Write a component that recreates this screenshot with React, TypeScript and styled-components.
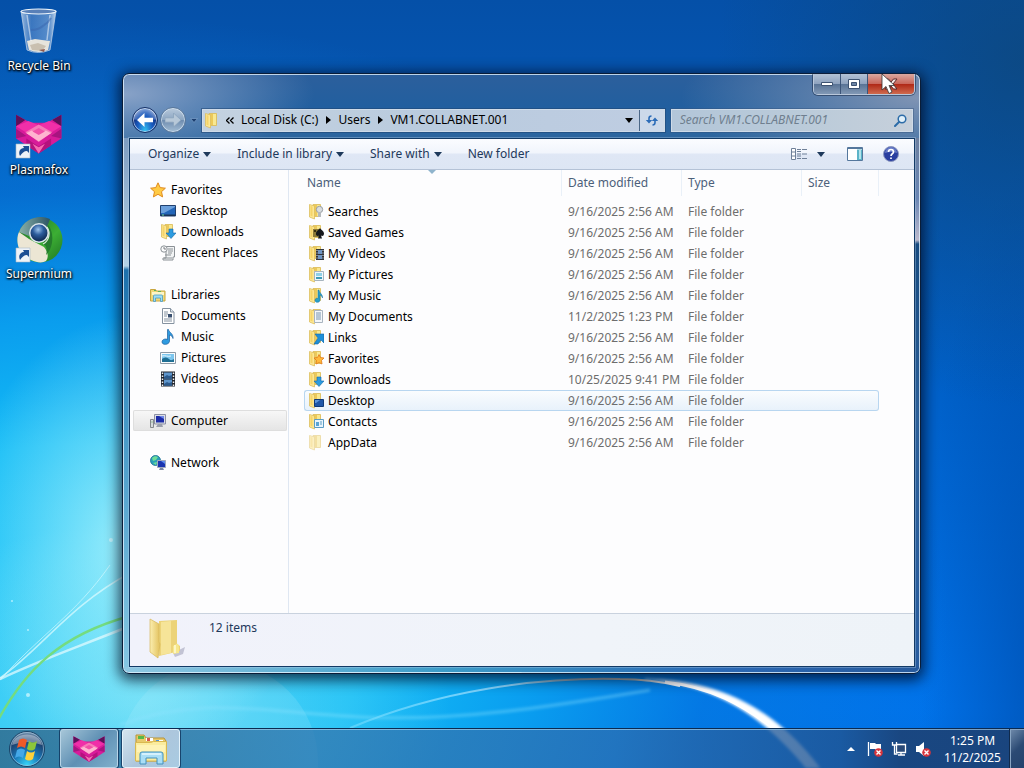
import React from "react";
import styled, { createGlobalStyle, css } from "styled-components";

const GlobalStyle = createGlobalStyle`
  * { box-sizing: border-box; }
  body {
    margin: 0;
    font: 12px/18px "Noto Sans", "Open Sans", sans-serif;
    color: #000;
  }
  button, input { font: inherit; color: inherit; }
  ul { list-style: none; margin: 0; padding: 0; }
  a { color: inherit; text-decoration: none; }
`;

const plainButton = css`
  border: 0;
  padding: 0;
  background: none;
  display: flex;
  align-items: center;
  justify-content: center;
`;

/* ---------- desktop ---------- */

const Desktop = styled.div`
  position: relative;
  min-height: 100vh;
  display: grid;
  grid-template-rows: 1fr 40px;
  overflow: hidden;
  background:
    radial-gradient(ellipse 17% 30% at 13% 71%, rgba(180, 246, 252, 0.85), rgba(150, 240, 250, 0) 100%),
    radial-gradient(ellipse 30% 24% at 14% 92%, rgba(120, 225, 245, 0.75), rgba(100, 220, 245, 0) 100%),
    radial-gradient(ellipse 85% 82% at 8% 84%, #16c4f8 0%, #14bcf6 32%, rgba(10, 160, 240, 0.95) 52%, rgba(6, 124, 224, 0.6) 72%, rgba(4, 100, 220, 0) 100%),
    radial-gradient(ellipse 30% 45% at 100% 8%, rgba(14, 70, 120, 0.75), rgba(0, 60, 130, 0) 100%),
    radial-gradient(ellipse 12% 70% at 102% 90%, rgba(0, 64, 150, 0.55), rgba(0, 64, 150, 0) 100%),
    linear-gradient(#0550a8 0%, #0556b2 15%, #0060c8 50%, #0072ea 92%, #0070e4 100%);
`;

const Streaks = styled.svg`
  position: absolute;
  inset: 0;
  width: 100%;
  height: 100%;
`;

const Workspace = styled.main`
  position: relative;
  padding-top: 7px;
`;

const Shortcuts = styled.ul`
  display: flex;
  flex-direction: column;
  gap: 36px;
  width: 78px;
`;

const Shortcut = styled.button`
  ${plainButton}
  flex-direction: column;
  width: 100%;
  gap: 2px;
  color: #fff;
  white-space: nowrap;
  text-shadow: 0 1px 2px #000, 1px 1px 2px #000, 0 0 3px rgba(0, 0, 0, 0.7);
`;

/* ---------- window ---------- */

const Window = styled.section`
  position: absolute;
  top: 73px;
  right: 103px;
  bottom: 54px;
  left: 122px;
  display: flex;
  flex-direction: column;
  padding: 0 5px 6px 6px;
  border: 1px solid #0a1d38;
  border-radius: 7px;
  background:
    radial-gradient(ellipse 24% 66px at 0 20px, rgba(148, 170, 204, 0.9), rgba(120, 150, 195, 0) 100%) 0 0 / 100% 64px no-repeat,
    radial-gradient(ellipse 30% 76px at 100% 24px, rgba(138, 154, 182, 0.9), rgba(120, 140, 175, 0) 100%) 0 0 / 100% 64px no-repeat,
    linear-gradient(#2c5f9c, #225f9f 50%, #2d669f) 0 0 / 100% 64px no-repeat,
    linear-gradient(#7e9cc0, #b4d2e6 128px, #1d70ac 132px, #3f93c4 260px, #84c6e2 530px) 0 64px / 50% 100% no-repeat,
    linear-gradient(#6b7f9f, #6a86b4 60px, #bcb9cc 102px, #174b80 106px, #2c5f98 280px, #285c9e) 100% 64px / 50% 530px no-repeat,
    linear-gradient(90deg, #8fc8e2, #3c9cc8 40%, #2a68b4);
  box-shadow:
    inset 0 0 0 1px rgba(225, 240, 252, 0.8),
    0 3px 14px 3px rgba(0, 8, 30, 0.75);
`;

const GlassFoot = styled.div`
  position: absolute;
  right: 1px;
  bottom: 1px;
  left: 1px;
  height: 5px;
  border-radius: 0 0 5px 5px;
  background: linear-gradient(90deg, #8fc8e2, #3c9cc8 40%, #2a68b4 75%, #275a9c);
`;

const TitleBar = styled.header`
  display: flex;
  justify-content: flex-end;
  height: 21px;
`;

const CaptionButtons = styled.div`
  display: flex;
  height: 21px;
  border: 1px solid #b9c7da;
  border-top: 0;
  border-radius: 0 0 5px 5px;
  overflow: hidden;
  box-shadow: 0 0 0 1px rgba(15, 32, 60, 0.5);
`;

const CaptionButton = styled.button<{ $close?: boolean }>`
  ${plainButton}
  width: ${(p) => (p.$close ? 46 : 27)}px;
  border-right: ${(p) => (p.$close ? "0" : "1px solid #3c5579")};
  background: ${(p) =>
    p.$close
      ? "linear-gradient(#d9a8a0, #c9685c 48%, #b02a18 52%, #cf6a4e)"
      : "linear-gradient(#b3c2d6, #8fa3bf 48%, #5a7496 52%, #8198b5)"};
`;

const NavRow = styled.nav`
  display: flex;
  align-items: center;
  height: 22px;
  margin: 14px 2px 7px 3px;
`;

const NavCircle = styled.button<{ $dim?: boolean }>`
  ${plainButton}
  flex: none;
  width: 26px;
  height: 26px;
  margin-right: 2px;
  border: 1px solid ${(p) => (p.$dim ? "#5a7799" : "#142f66")};
  border-radius: 50%;
  background: ${(p) =>
    p.$dim
      ? "linear-gradient(#b9cadc, #8ca6c2 48%, #6f8db0 52%, #a3bdd4)"
      : "radial-gradient(ellipse at 50% 100%, #35c8f5 0%, #1a5cc0 45%, rgba(20, 60, 150, 0) 75%), linear-gradient(#a9bfe2, #5575b8 45%, #12307e 52%, #1c56b4)"};
  box-shadow: inset 0 0 0 1px rgba(225, 238, 250, 0.65);
`;

const History = styled.button`
  ${plainButton}
  width: 12px;
  height: 20px;
`;

const AddressBar = styled.div`
  display: flex;
  align-items: stretch;
  flex: 462;
  height: 23px;
  margin: 0 6px 0 2px;
  border: 1px solid #cfdbe8;
  background: linear-gradient(90deg, #c4d2e0, #b9cbde 50%, #bfcde2);
  box-shadow: 0 0 0 1px rgba(30, 66, 110, 0.5);
`;

const AddressIcon = styled.span`
  display: flex;
  align-items: center;
  width: 23px;
  padding-left: 1px;
`;

const Crumb = styled.button<{ $lead?: boolean }>`
  ${plainButton}
  margin-right: ${(p) => (p.$lead ? 7 : 0)}px;
  white-space: nowrap;
`;

const CrumbMark = styled.span`
  display: flex;
  align-items: center;
  justify-content: center;
  width: 20px;
`;

const AddressAction = styled.button<{ $end?: boolean }>`
  ${plainButton}
  width: ${(p) => (p.$end ? 25 : 20)}px;
  margin-left: ${(p) => (p.$end ? "0" : "auto")};
  border-left: ${(p) => (p.$end ? "1px solid #4b6788" : "0")};
  background: ${(p) => (p.$end ? "rgba(225, 235, 248, 0.4)" : "none")};
`;

const SearchBox = styled.label`
  display: flex;
  align-items: center;
  flex: 228;
  height: 23px;
  padding: 0 5px 0 8px;
  border: 1px solid #cfdbe8;
  background: linear-gradient(90deg, #b3c6d9, #b9cad9 50%, #c6d0db);
  box-shadow: 0 0 0 1px rgba(50, 80, 120, 0.4);
`;

const SearchInput = styled.input`
  flex: 1;
  min-width: 0;
  padding: 0;
  border: 0;
  outline: 0;
  background: none;
  font-style: italic;
  &::placeholder { color: #6f7f8f; opacity: 1; }
`;

const Client = styled.div`
  position: relative;
  flex: 1;
  display: grid;
  grid-template-rows: 31px 1fr 53px;
  min-height: 0;
  border: 1px solid #123a66;
  background: #fdfdfe;
  box-shadow: 0 0 0 1px rgba(190, 215, 238, 0.35);
`;

const Toolbar = styled.div`
  display: flex;
  align-items: center;
  padding: 0 11px 0 5px;
  border-bottom: 1px solid #b4c2d6;
  background: linear-gradient(#fbfcff, #f1f5fc 45%, #dfe7f5 52%, #dde6f4);
  color: #1e395b;
`;

const ToolButton = styled.button`
  ${plainButton}
  gap: 4px;
  height: 24px;
  padding: 0 13px;
  white-space: nowrap;
`;

const IconTools = styled.div`
  display: flex;
  align-items: center;
  margin-left: auto;
`;

const IconTool = styled.button<{ $width: number }>`
  ${plainButton}
  width: ${(p) => p.$width}px;
  height: 24px;
`;

const Body = styled.div`
  display: grid;
  grid-template-columns: 159px 1fr;
  min-height: 0;
`;

const Sidebar = styled.aside`
  padding: 9px 1px 0 3px;
  border-right: 1px solid #dfe7f2;
`;

const Group = styled.ul`
  margin-bottom: 21px;
`;

const Place = styled.a<{ $child?: boolean; $current?: boolean }>`
  display: flex;
  align-items: center;
  gap: 5px;
  height: 21px;
  padding-left: ${(p) => (p.$child ? 27 : 17)}px;
  border-radius: 2px;
  background: ${(p) => (p.$current ? "linear-gradient(#f8f8f8, #e4e4e4)" : "none")};
  box-shadow: ${(p) => (p.$current ? "inset 0 0 0 1px #dedede" : "none")};
`;

const Files = styled.div`
  padding-left: 15px;
`;

const FileTable = styled.table`
  table-layout: fixed;
  width: 575px;
  max-width: 100%;
  border-collapse: separate;
  border-spacing: 0;
`;

const Col = styled.col<{ $width: number }>`
  width: ${(p) => p.$width}px;
`;

const HeadCell = styled.th`
  position: relative;
  height: 31px;
  padding: 0 0 5px;
  font-weight: 400;
  text-align: left;
  color: #4c607a;
`;

const HeadLabel = styled.span<{ $first?: boolean }>`
  display: block;
  padding: 4px 0 4px ${(p) => (p.$first ? 3 : 6)}px;
  border-right: 1px solid #e9f0f8;
`;

const SortMark = styled.svg`
  position: absolute;
  top: 0;
  left: 50%;
  margin-left: -5px;
`;

const FileRow = styled.tr<{ $hot?: boolean }>`
  color: #6d6d6d;
  ${(p) =>
    p.$hot &&
    css`
      td {
        border-top: 1px solid #b8d6f0;
        border-bottom: 1px solid #b8d6f0;
        background: linear-gradient(#fafcfe, #e8f2fb);
      }
      td:first-child { border-left: 1px solid #b8d6f0; border-radius: 3px 0 0 3px; padding-left: 3px; }
      td:last-child { border-right: 1px solid #b8d6f0; border-radius: 0 3px 3px 0; }
    `}
`;

const FileCell = styled.td`
  height: 21px;
  padding: 0 0 0 6px;
  line-height: 19px;
  white-space: nowrap;
  &:first-child { padding-left: 4px; }
`;

const FileName = styled.a`
  display: flex;
  align-items: center;
  gap: 4px;
  color: #000;
`;

const Details = styled.footer`
  display: flex;
  gap: 20px;
  padding: 3px 0 0 17px;
  border-top: 1px solid #c9d2de;
  background: linear-gradient(90deg, #f1f2fb, #f0f4f9 60%, #eef3f8);
  color: #1e395b;
`;

const ItemCount = styled.span`
  padding-top: 2px;
`;

const Pointer = styled.svg`
  position: absolute;
  top: 73px;
  right: 128px;
  width: 15px;
  height: 22px;
`;

/* ---------- taskbar ---------- */

const Taskbar = styled.footer`
  position: relative;
  display: flex;
  align-items: stretch;
  border-top: 1px solid #0b2a50;
  background: linear-gradient(90deg, rgba(48, 105, 140, 0.82), rgba(50, 122, 178, 0.8) 30%, rgba(42, 110, 178, 0.75) 60%, rgba(32, 84, 146, 0.8) 82%, rgba(28, 66, 118, 0.9) 88%);
  box-shadow: inset 0 1px 0 rgba(180, 220, 245, 0.6);
  color: #fff;
`;

const StartButton = styled.button`
  ${plainButton}
  width: 53px;
  margin-right: 7px;
`;

const TaskButton = styled.button<{ $active?: boolean }>`
  ${plainButton}
  width: 58px;
  margin-right: 4px;
  border: 1px solid ${(p) => (p.$active ? "#e4f2fa" : "#b8d4e6")};
  border-radius: 3px;
  box-shadow: 0 0 0 1px rgba(10, 40, 80, 0.7);
  background: ${(p) =>
    p.$active
      ? "linear-gradient(135deg, #d3e4ee, #adc6dc 50%, #a9cbe2)"
      : "linear-gradient(135deg, #a6c6d8, #5f90b4 50%, #7fb0cc)"};
`;

const Tray = styled.div`
  display: flex;
  align-items: center;
  margin-left: auto;
`;

const TrayButton = styled.button`
  ${plainButton}
  width: 24px;
  height: 30px;
`;

const Clock = styled.time`
  width: 75px;
  line-height: 17px;
  text-align: center;
`;

const ShowDesktop = styled.button`
  width: 14px;
  padding: 0;
  border: 1px solid #88a4c2;
  border-width: 1px 0 0 1px;
  background: linear-gradient(135deg, #6c87a8, #2b4a74 50%, #24426c);
  box-shadow: -1px 0 0 #102a4c;
`;

/* ---------- drawings ---------- */

const Caret = ({ color = "#1e395b" }: { color?: string }) => (
  <svg width="8" height="5" viewBox="0 0 8 5"><path d="M0 0h8L4 5z" fill={color} /></svg>
);

const CrumbArrow = () => (
  <svg width="5" height="8" viewBox="0 0 5 8"><path d="M0 0v8l5-4z" fill="#000" /></svg>
);

const overlays: Record<string, React.ReactNode> = {
  Searches: <><circle cx="11.5" cy="6.500" r="3.2" fill="#d9dde0" stroke="#9a9fa4" /><path d="M10 9h3v5h-3z" fill="#b5b9bd" /></>,
  "Saved Games": <><path d="M5 5h6v8H5z" fill="#8c7a38" /><path d="M6 6h2v2H6zM8 9h2v2H8z" fill="#3b3210" /><path d="M12 4c1 2 4 3 4 5.500s-2 3-3 2l1 3h-4l1-3c-1 1-3 .5-3-2S11 6 12 4z" fill="#15181c" /></>,
  "My Videos": <><path d="M8 4h8v11H8z" fill="#30343c" /><path d="M10 5h4v4h-4zM10 10h4v4h-4z" fill="#6f95c4" /><path d="M9 5v10M15 5v10" stroke="#dfe3e8" strokeDasharray="1 1.500" /></>,
  "My Pictures": <><path d="M6.500 5.500h9v9h-9z" fill="#eef6fa" stroke="#a7b4be" /><path d="M8 7h6v3H8z" fill="#8fd0e8" /><path d="M8 11h6v2H8z" fill="#3c9ab8" /></>,
  "My Music": <path d="M11 3c0 3 4 4 3.500 8-.5-2-1.500-2.500-2.500-3v5c0 3-5 3-5 .5S9 11 10 11.500V3z" fill="#28a0c8" stroke="#166f9c" strokeWidth=".5" />,
  "My Documents": <><path d="M6.500 2.500h8v12h-8z" fill="#f4f7fa" stroke="#a9b4c0" /><path d="M8 5h5M8 7h5M8 9h5M8 11h5" stroke="#7794b0" /></>,
  Links: <path d="M7 5h9v9l-3-3-3 4H6l4-6z" fill="#1e8fd8" stroke="#1267a8" strokeWidth=".6" />,
  Favorites: <path d="M11 4.500l1.500 3 3.500.5-2.500 2.500.5 3.500-3-1.500-3 1.500.5-3.500L6 8l3.500-.5z" fill="#ffb83a" stroke="#e07818" strokeWidth=".8" />,
  Downloads: <path d="M9 6h4v4h3l-5 5.500L6 10h3z" fill="#2c9be0" stroke="#156aa8" strokeWidth=".6" />,
  Desktop: <><path d="M6.500 7.500h9v7h-9z" fill="#1e56a8" stroke="#0f3a78" /><path d="M7 8h5l-4 3H7z" fill="#5c95dc" /></>,
  Contacts: <><path d="M6.500 6.500h9v8h-9z" fill="#e8f4fc" stroke="#5b9cc4" /><path d="M8 9h3v4H8z" fill="#5aa4d4" /><path d="M12 9h2M12 11h2" stroke="#5b9cc4" /></>,
};

const FolderIcon = ({ kind = "", faded = false }: { kind?: string; faded?: boolean }) => (
  <svg width="16" height="17" viewBox="0 0 16 17" opacity={faded ? 0.55 : 1}>
    <path d="M5 1.500h7.500v12H5z" fill="#ecc95a" stroke="#dcbc58" strokeWidth=".8" />
    <path d="M9 2h3v11H9z" fill="#f9e890" />
    <path d="M1.500 1.500L6.500 3v13l-5-2z" fill="#fde794" stroke="#dcbe5e" strokeWidth=".8" />
    <path d="M2.500 3l2 .6v10l-2-.8z" fill="#f5d468" />
    {overlays[kind]}
  </svg>
);

const placeDrawings: Record<string, React.ReactNode> = {
  Favorites: <path d="M8 .8l2.200 4.800 5.200.6-3.900 3.500 1.100 5.200L8 12.300l-4.600 2.600 1.100-5.200L.6 6.200l5.200-.6z" fill="#ffcb45" stroke="#e08a1e" />,
  Desktop: <><path d="M.5 2.500h15v10.500H.5z" fill="#2466b8" stroke="#21406e" /><path d="M1 3h14v1L4 10H1z" fill="#6ca0dc" /><path d="M1 11.500h14V13H1z" fill="#1b3456" /><path d="M2 12h2" stroke="#6fe0a0" /></>,
  Recent: <><path d="M4 1.500h10.500V12H13v3H3v-2h3V6z" fill="#f2f4f5" stroke="#8b9196" /><path d="M8 4h5M8 6h5M8 8h4M5 10h6M4 13h8" stroke="#8b9196" /><circle cx="4" cy="4" r="3.200" fill="#fafbfc" stroke="#8b9196" /><path d="M4 2v2h2" fill="none" stroke="#5d6368" strokeWidth=".8" /></>,
  Libraries: <><path d="M.5 2.500h5l1 1.500h8.500v10H.5z" fill="#f0d878" stroke="#c8a640" /><path d="M2 5h12v3H2z" fill="#fdf5c8" /><path d="M4 3.500h2M8 4.500h3" stroke="#5ab45a" /><path d="M3.500 14.500V9q0-1 1-1h7q1 0 1 1v5.500h-2V11h-5v3.500z" fill="#9edcf4" stroke="#4a9cc4" strokeWidth=".8" /></>,
  Documents: <><path d="M2.500.5h8l3.500 3.500v11.500H2.500z" fill="#fff" stroke="#8592a0" /><path d="M10.500.5v3.500H14" fill="#dfe6ee" stroke="#8592a0" /><path d="M4 4h4M4 6h4M4 8h3M4 11h8M4 13h8" stroke="#8592a0" /><path d="M8 6h4v3.500H8z" fill="#3a5070" /></>,
  Music: <path d="M8.500.5c.5 3 5 4 4.500 9-.5-2-1.500-3-3.500-3.500v6c0 4-7.500 4.500-7.500 1 0-3 4-3.500 5.500-2.500V.5z" fill="#2f9be0" stroke="#1c5f9c" strokeWidth=".7" />,
  Pictures: <><path d="M.5 2.500h15v11H.5z" fill="#fafcfd" stroke="#8d9aa6" /><path d="M2 4h12v8H2z" fill="#7cc6ee" /><path d="M2 9c3-2 5-2 7 0s3 1 5 0v3H2z" fill="#1f6f94" /><path d="M2 6c3-1 6 1 9 0" stroke="#e8f8ff" fill="none" /></>,
  Videos: <><path d="M1 .5h14v15H1z" fill="#20242c" /><path d="M4 1.500h8v6H4zM4 8.500h8v6H4z" fill="#5f96cc" /><path d="M4 6l3-2 2 1 3-1v3.500H4zM4 13l3-2 2 1 3-1v3.500H4z" fill="#2c5a8c" /><path d="M2.500 1.500v14M13.500 1.500v14" stroke="#f0f2f4" strokeWidth="1.500" strokeDasharray="1.500 1.500" /></>,
  Computer: <><path d="M.5 6.500h3v8h-3z" fill="#d7dadd" stroke="#85898d" /><path d="M1.500 9h1" stroke="#58a858" /><path d="M4.500 1.500h11v9.500h-11z" fill="#dcdfe6" stroke="#8c90a4" /><path d="M6 3h8v6.500H6z" fill="#1c2ca8" /><path d="M9 3h5v3z" fill="#7088e8" /><path d="M8 11h4l1 3H6z" fill="#9ba0ac" /></>,
  Network: <><circle cx="5.500" cy="5.500" r="5" fill="#28a0b8" stroke="#176a90" strokeWidth=".8" /><path d="M2 3c2-2 4-2 6-1L6 5 3 6zM3 8l4-1-1 3z" fill="#70dc98" /><path d="M7.500 5.500h8v7h-8z" fill="#1a34b0" stroke="#a0a8bc" /><path d="M11 6h4v3z" fill="#5c8cf0" /><path d="M10 13h3l1 2H9z" fill="#7c88a4" /></>,
};

const PlaceIcon = ({ name }: { name: string }) =>
  name === "Downloads" ? (
    <FolderIcon kind="Downloads" />
  ) : (
    <svg width="16" height="16" viewBox="0 0 16 16">{placeDrawings[name]}</svg>
  );

const FoxHead = () => (
  <>
    <path d="M2 2l14 9h16l14-9v27L24 46 2 29z" fill="#d81b9a" />
    <path d="M2 2l9 6-9 7zM46 2l-9 6 9 7z" fill="#5e1059" />
    <path d="M2 15l12-6 10 5 10-5 12 6-22 16z" fill="#f02fa8" />
    <path d="M2 18l10 8-10 3zM46 18l-10 8 10 3z" fill="#a81480" />
    <path d="M11 22l13-9 13 9-13 11z" fill="#f77ab8" />
    <path d="M17 20l7 4 7-4 5 3-12 9-12-9z" fill="#ffb3d0" />
    <path d="M18 21l6-4 6 4-6 4z" fill="#f24fa8" />
    <path d="M12 29l12 9 12-9v8L24 46 12 37z" fill="#b5127e" />
    <path d="M18 35l6 4 6-4-6 11z" fill="#f56ab2" />
  </>
);

const ShortcutArrow = () => (
  <>
    <path d="M1 33h14v14H1z" fill="#eef3f8" stroke="#aab8c8" strokeWidth=".6" />
    <path d="M5 45c-2-4 0-8 4-8l-1-2h6v7l-2-2c-3 0-5 2-7 5z" fill="#1c4f94" />
  </>
);

const RecycleIcon = () => (
  <svg width="48" height="48" viewBox="0 0 48 48">
    <defs>
      <linearGradient id="bin" x2="1"><stop stopColor="#cfe0f2" stopOpacity=".75" /><stop offset=".3" stopColor="#7ea4d8" stopOpacity=".45" /><stop offset=".8" stopColor="#a9c5e8" stopOpacity=".5" /><stop offset="1" stopColor="#e0ecf8" stopOpacity=".85" /></linearGradient>
    </defs>
    <path d="M6 4l6 39q11 5 23 0l6-39z" fill="url(#bin)" stroke="#b8cce4" strokeWidth=".8" />
    <ellipse cx="23.500" cy="4.500" rx="17.500" ry="2.500" fill="#5980b8" stroke="#eef5fb" strokeWidth="1.200" />
    <path d="M12 34l8-2 7 1 8 1-2 9q-9 4-19 0z" fill="#e6e4dc" />
    <path d="M15 38l8-2 8 3-4 5-10-1z" fill="#c9c0b0" />
    <path d="M24 43l6-1-1 3z" fill="#90584c" />
    <path d="M12 8l4 26M35 8l-3 25" stroke="#fff" strokeOpacity=".5" strokeWidth="1.500" />
    <path d="M16 23q8 0 13-5M29 18q4-2 7-7" fill="none" stroke="#3a68b0" strokeOpacity=".55" strokeWidth="2" />
  </svg>
);

const PlasmafoxIcon = () => (
  <svg width="48" height="48" viewBox="0 0 48 48">
    <g transform="translate(-1 2) scale(1.03 .88)"><FoxHead /></g>
    <ShortcutArrow />
  </svg>
);

const SupermiumIcon = () => (
  <svg width="48" height="48" viewBox="0 0 48 48">
    <defs>
      <radialGradient id="ball" cx=".45" cy=".3" r=".7"><stop stopColor="#9cc4ec" /><stop offset=".45" stopColor="#2c5c9c" /><stop offset="1" stopColor="#0e2850" /></radialGradient>
      <linearGradient id="leaf" x2="1" y2="1"><stop stopColor="#1b6a24" /><stop offset=".6" stopColor="#3cae34" /><stop offset="1" stopColor="#1f7424" /></linearGradient>
      <linearGradient id="slate" x2="1"><stop stopColor="#88b0a8" /><stop offset="1" stopColor="#2c5464" /></linearGradient>
    </defs>
    <circle cx="25" cy="25" r="22.500" fill="url(#leaf)" />
    <path d="M4 17C9 3 25-1 35 4l-3 8H23L14 21z" fill="url(#slate)" />
    <path d="M4 17c-4 9-1 22 12 28 6 3 12 3 15 1 3-4 2-9-2-14L14 24z" fill="#ece6d4" />
    <path d="M33 10c7 8 5 24-2 30 2-6 0-10-3-11z" fill="#257c2c" />
    <path d="M32 12c4 6 2 14-4 17" fill="none" stroke="#d8ecd8" strokeWidth="1.200" />
    <circle cx="24" cy="18" r="10" fill="#dfe8ee" />
    <circle cx="24" cy="18" r="8.500" fill="url(#ball)" />
    <ShortcutArrow />
  </svg>
);

const BigFolder = () => (
  <svg width="42" height="44" viewBox="0 0 42 44">
    <defs>
      <linearGradient id="flap" x2="1"><stop stopColor="#fbeeb0" /><stop offset="1" stopColor="#e2c15c" /></linearGradient>
    </defs>
    <path d="M26 36l12-6-2 7-8 3z" fill="#9a9cb4" opacity=".55" />
    <path d="M12 4l18-1v24l3 2v5l-21 5z" fill="#ecd378" />
    <path d="M14 5l10-1v32l-10 2z" fill="#f6e498" />
    <path d="M28 28q4-4 4 4v4l-6 1V29z" fill="#f7e88c" />
    <path d="M28 28v8" stroke="#fffbd8" strokeWidth="1.500" />
    <path d="M3 2l9 5v18l1 2-2 14-8-6z" fill="url(#flap)" stroke="#d7b85c" strokeWidth=".7" />
  </svg>
);

const StartOrb = () => (
  <svg width="38" height="38" viewBox="0 0 38 38">
    <defs>
      <radialGradient id="orb" cx=".5" cy=".95" r=".95"><stop stopColor="#35d4f8" /><stop offset=".4" stopColor="#1a78b8" /><stop offset=".75" stopColor="#1c3f6c" /><stop offset="1" stopColor="#7f9cb8" /></radialGradient>
    </defs>
    <circle cx="19" cy="19" r="17.500" fill="url(#orb)" stroke="#1a4468" />
    <circle cx="19" cy="19" r="16.500" fill="none" stroke="#a8cce0" strokeOpacity=".6" />
    <path d="M4 15C6 1 32 1 34 15q-15-6-30 0z" fill="#fff" opacity=".38" />
    <path d="M11 10q4-3 8 0l-2 8q-4-3-8 0z" fill="#ef5a28" />
    <path d="M21 11q4 3 8 0l-2 8q-4 3-8 0z" fill="#8cc63a" />
    <path d="M9 20q4-3 8 0l-2 8q-4-3-8 0z" fill="#45a8e8" />
    <path d="M19 21q4 3 8 0l-2 8q-4 3-8 0z" fill="#ffd23c" />
  </svg>
);

const ExplorerIcon = () => (
  <svg width="34" height="32" viewBox="0 0 34 32">
    <path d="M2 2h8l2 3h18l2 3v20H2z" fill="#e9c96a" stroke="#b89438" />
    <path d="M4 3h6v3H4z" fill="#58b848" /><path d="M12 5h7v3h-7z" fill="#fff" /><path d="M13 5h3v3h-3z" fill="#d8584c" /><path d="M22 7h7v2h-7z" fill="#fff" /><path d="M22 7h3v2h-3z" fill="#4a90d8" />
    <path d="M1.500 9.500h15l3-1h13V28h-31z" fill="#fbec9e" stroke="#d8b850" />
    <path d="M3 12h28v7H3z" fill="#fff6c0" opacity=".7" />
    <path d="M6 31V21q0-2 2-2h19q2 0 2 2v10h-6v-6H12v6z" fill="#a9def6" stroke="#4390bc" />
    <path d="M8 21h19" stroke="#e4f7ff" strokeWidth="1.500" />
  </svg>
);

const RedCross = () => (
  <>
    <circle cx="11.500" cy="11.500" r="4.300" fill="#d8343c" />
    <path d="M9.500 9.500l4 4m0-4l-4 4" stroke="#fff" strokeWidth="1.400" />
  </>
);

/* ---------- content ---------- */

const files = [
  ["Searches", "9/16/2025 2:56 AM"],
  ["Saved Games", "9/16/2025 2:56 AM"],
  ["My Videos", "9/16/2025 2:56 AM"],
  ["My Pictures", "9/16/2025 2:56 AM"],
  ["My Music", "9/16/2025 2:56 AM"],
  ["My Documents", "11/2/2025 1:23 PM"],
  ["Links", "9/16/2025 2:56 AM"],
  ["Favorites", "9/16/2025 2:56 AM"],
  ["Downloads", "10/25/2025 9:41 PM"],
  ["Desktop", "9/16/2025 2:56 AM"],
  ["Contacts", "9/16/2025 2:56 AM"],
  ["AppData", "9/16/2025 2:56 AM"],
];

const places = [
  { name: "Favorites", children: [["Desktop", "Desktop"], ["Downloads", "Downloads"], ["Recent", "Recent Places"]] },
  { name: "Libraries", children: [["Documents", "Documents"], ["Music", "Music"], ["Pictures", "Pictures"], ["Videos", "Videos"]] },
  { name: "Computer", children: [] },
  { name: "Network", children: [] },
];

const shortcuts = [
  { name: "Recycle Bin", icon: <RecycleIcon /> },
  { name: "Plasmafox", icon: <PlasmafoxIcon /> },
  { name: "Supermium", icon: <SupermiumIcon /> },
];

const Wallpaper = () => (
  <Streaks viewBox="0 0 1024 768" preserveAspectRatio="none" aria-hidden="true">
    <defs>
      <filter id="soft" x="-20%" y="-20%" width="140%" height="140%"><feGaussianBlur stdDeviation="1.500" /></filter>
      <linearGradient id="arc" gradientUnits="userSpaceOnUse" x1="350" y1="0" x2="680" y2="0">
        <stop stopColor="#7fe0ff" stopOpacity=".5" /><stop offset=".5" stopColor="#8fd8ff" /><stop offset=".68" stopColor="#98a8b0" /><stop offset=".85" stopColor="#b0b0a8" /><stop offset="1" stopColor="#fff" />
      </linearGradient>
    </defs>
    <circle cx="218" cy="762" r="100" fill="#bff0ff" opacity=".16" />
    <path d="M0 679C40 660 70 650 130 626" fill="none" stroke="#e8fcff" strokeWidth="2.500" opacity=".7" />
    <path d="M0 678C40 650 70 605 130 573" fill="none" stroke="#e0fcff" strokeWidth="1.500" opacity=".7" />
    <path d="M0 680C40 635 75 615 110 565" fill="none" stroke="#e0fcff" strokeWidth="1" opacity=".6" />
    <path d="M-3 722C25 670 60 635 130 616" fill="none" stroke="#74dc80" strokeWidth="2.500" />
    <path d="M120 725C200 695 260 712 360 717S560 705 650 690" fill="none" stroke="#8fe4ff" strokeWidth="3" opacity=".4" filter="url(#soft)" />
    <path d="M350 728C440 690 540 677 620 679Q650 679 680 686" fill="none" stroke="url(#arc)" strokeWidth="2" />
    <path d="M645 679C705 684 755 706 806 768l14 0C765 695 700 680 645 679z" fill="#fff" stroke="#bfe0ff" strokeWidth="1" filter="url(#soft)" />
    <path d="M665 682C710 687 742 704 777 731" fill="none" stroke="#fff" strokeWidth="3" />
    <g fill="#d8faff" opacity=".7"><circle cx="111" cy="540" r="2" /><circle cx="28" cy="695" r="2" /><circle cx="12" cy="601" r="1" /><circle cx="28" cy="630" r="1" /></g>
  </Streaks>
);

export default function App() {
  return (
    <>
      <GlobalStyle />
      <Desktop>
        <Wallpaper />
        <Workspace>
          <Shortcuts>
            {shortcuts.map((s) => (
              <li key={s.name}><Shortcut>{s.icon}{s.name}</Shortcut></li>
            ))}
          </Shortcuts>

          <Window aria-label="VM1.COLLABNET.001">
            <GlassFoot />
            <TitleBar>
              <CaptionButtons>
                <CaptionButton aria-label="Minimize">
                  <svg width="12" height="6" viewBox="0 0 12 6"><path d="M.5 1.500h11v3H.5z" fill="#fff" stroke="#3d5271" /></svg>
                </CaptionButton>
                <CaptionButton aria-label="Maximize">
                  <svg width="12" height="10" viewBox="0 0 12 10"><path d="M.5.5h11v9H.5z" fill="#fff" stroke="#3d5271" /><path d="M3.500 3.500h5v3h-5z" fill="#6c84a4" stroke="#3d5271" /></svg>
                </CaptionButton>
                <CaptionButton $close aria-label="Close">
                  <svg width="14" height="12" viewBox="0 0 14 12"><path d="M1 1h3.500L7 4l2.500-3H13L9 6l4 5H9.500L7 8l-2.500 3H1l4-5z" fill="#f4e8e4" stroke="#5a2a2c" /></svg>
                </CaptionButton>
              </CaptionButtons>
            </TitleBar>

            <NavRow aria-label="Address">
              <NavCircle aria-label="Back">
                <svg width="16" height="14" viewBox="0 0 16 14"><path d="M7.500 0L0 7l7.500 7V9.200H16V4.800H7.500z" fill="#fff" /></svg>
              </NavCircle>
              <NavCircle $dim aria-label="Forward">
                <svg width="16" height="14" viewBox="0 0 16 14"><path d="M8.500 0L16 7l-7.500 7V9.200H0V4.800h8.500z" fill="#b7c8d8" stroke="#8aa3bd" strokeWidth=".8" /></svg>
              </NavCircle>
              <History aria-label="Recent pages">
                <svg width="8" height="5" viewBox="0 0 8 5"><path d="M.5.5h7L4 4.500z" fill="#1c3f70" stroke="#7da2cc" strokeWidth=".7" /></svg>
              </History>
              <AddressBar>
                <AddressIcon><FolderIcon /></AddressIcon>
                <Crumb $lead aria-label="Parent folders">
                  <svg width="8" height="7" viewBox="0 0 8 7"><path d="M3.500.5l-3 3 3 3M7.500.5l-3 3 3 3" fill="none" stroke="#000" strokeWidth="1.300" /></svg>
                </Crumb>
                <Crumb>Local Disk (C:)</Crumb>
                <CrumbMark><CrumbArrow /></CrumbMark>
                <Crumb>Users</Crumb>
                <CrumbMark><CrumbArrow /></CrumbMark>
                <Crumb>VM1.COLLABNET.001</Crumb>
                <AddressAction aria-label="Previous locations"><Caret color="#000" /></AddressAction>
                <AddressAction $end aria-label="Refresh">
                  <svg width="14" height="13" viewBox="0 0 14 13">
                    <path d="M4 7V4.500Q4 2 6.500 2M10 6v2.500Q10 11 7.500 11" fill="none" stroke="#2c6cb8" strokeWidth="1.600" />
                    <path d="M.8 6h6.400L4 9.500zM6.800 7h6.400L10 3.500z" fill="#2c6cb8" />
                  </svg>
                </AddressAction>
              </AddressBar>
              <SearchBox>
                <SearchInput type="text" placeholder="Search VM1.COLLABNET.001" aria-label="Search VM1.COLLABNET.001" />
                <svg width="13" height="13" viewBox="0 0 13 13"><circle cx="8" cy="5" r="3.800" fill="#e0f0fa" stroke="#2c6ca8" strokeWidth="1.500" /><path d="M5 8l-4 4" stroke="#2c6ca8" strokeWidth="2" strokeLinecap="round" /></svg>
              </SearchBox>
            </NavRow>

            <Client>
              <Toolbar role="toolbar">
                <ToolButton>Organize <Caret /></ToolButton>
                <ToolButton>Include in library <Caret /></ToolButton>
                <ToolButton>Share with <Caret /></ToolButton>
                <ToolButton>New folder</ToolButton>
                <IconTools>
                  <IconTool $width={24} aria-label="Change your view">
                    <svg width="16" height="12" viewBox="0 0 16 12"><path d="M.5.5h4v11h-4zM.5 4h4M.5 8h4" fill="#fff" stroke="#6f8098" /><path d="M6 1.500h4M11 1.500h5M6 3.500h4M6 6h4M11 6h5M6 8h4M6 10.500h4M11 10.500h5" stroke="#6f8098" /></svg>
                  </IconTool>
                  <IconTool $width={20} aria-label="More view options"><Caret /></IconTool>
                  <IconTool $width={48} aria-label="Show the preview pane">
                    <svg width="16" height="14" viewBox="0 0 16 14"><path d="M.5.5h15v13H.5z" fill="#fff" stroke="#54779c" /><path d="M.5 1.500h15" stroke="#54779c" /><path d="M10 2.500h5V13h-5z" fill="#5cb4c8" /><path d="M12 3h2v9h-2z" fill="#b4e4ec" /></svg>
                  </IconTool>
                  <IconTool $width={24} aria-label="Get help">
                    <svg width="16" height="16" viewBox="0 0 16 16"><circle cx="8" cy="8" r="7.500" fill="#2a3fa0" stroke="#8c98c0" /><path d="M2 7a6 6 0 0112 0q-6-2-12 0z" fill="#8fa2e0" opacity=".6" /><path d="M5.500 6q0-2.500 2.500-2.500T10.500 6q0 1-1.200 1.800T8 10M8 11.500v1.500" fill="none" stroke="#fff" strokeWidth="1.700" /></svg>
                  </IconTool>
                </IconTools>
              </Toolbar>

              <Body>
                <Sidebar>
                  {places.map((group) => (
                    <Group key={group.name}>
                      <li>
                        <Place href="#" $current={group.name === "Computer"}>
                          <PlaceIcon name={group.name} />{group.name}
                        </Place>
                      </li>
                      {group.children.map(([icon, label]) => (
                        <li key={label}>
                          <Place href="#" $child><PlaceIcon name={icon} />{label}</Place>
                        </li>
                      ))}
                    </Group>
                  ))}
                </Sidebar>

                <Files>
                  <FileTable>
                    <colgroup><Col $width={258} /><Col $width={120} /><Col $width={120} /><Col $width={77} /></colgroup>
                    <thead>
                      <tr>
                        <HeadCell>
                          <HeadLabel $first>Name</HeadLabel>
                          <SortMark width="8" height="4" viewBox="0 0 8 4"><path d="M0 0h8L4 4z" fill="#8fb4cc" /></SortMark>
                        </HeadCell>
                        <HeadCell><HeadLabel>Date modified</HeadLabel></HeadCell>
                        <HeadCell><HeadLabel>Type</HeadLabel></HeadCell>
                        <HeadCell><HeadLabel>Size</HeadLabel></HeadCell>
                      </tr>
                    </thead>
                    <tbody>
                      {files.map(([name, date]) => (
                        <FileRow key={name} $hot={name === "Desktop"}>
                          <FileCell>
                            <FileName href="#"><FolderIcon kind={name} faded={name === "AppData"} />{name}</FileName>
                          </FileCell>
                          <FileCell>{date}</FileCell>
                          <FileCell>File folder</FileCell>
                          <FileCell />
                        </FileRow>
                      ))}
                    </tbody>
                  </FileTable>
                </Files>
              </Body>

              <Details>
                <BigFolder />
                <ItemCount>12 items</ItemCount>
              </Details>
            </Client>
          </Window>

          <Pointer viewBox="0 0 15 22" aria-hidden="true">
            <path d="M1 1v16l4-3.500 3 7 3-1.500-3-6.500h5.500z" fill="#fff" stroke="#333" strokeWidth=".8" />
          </Pointer>
        </Workspace>

        <Taskbar>
          <StartButton aria-label="Start"><StartOrb /></StartButton>
          <TaskButton aria-label="Plasmafox">
            <svg width="34" height="28" viewBox="0 0 48 48" preserveAspectRatio="none"><FoxHead /></svg>
          </TaskButton>
          <TaskButton $active aria-label="Windows Explorer"><ExplorerIcon /></TaskButton>
          <Tray>
            <TrayButton aria-label="Show hidden icons">
              <svg width="8" height="4" viewBox="0 0 8 4"><path d="M0 4h8L4 0z" fill="#fff" /></svg>
            </TrayButton>
            <TrayButton aria-label="Action Center">
              <svg width="16" height="16" viewBox="0 0 16 16"><path d="M1.500 1v14" stroke="#fff" strokeWidth="1.300" /><path d="M3 2h5l1 1h5v6H9L8 8H3z" fill="#fff" /><RedCross /></svg>
            </TrayButton>
            <TrayButton aria-label="Network">
              <svg width="16" height="16" viewBox="0 0 16 16"><path d="M5.500 3.500h9v8h-9z" fill="#2a4a78" stroke="#fff" strokeWidth="1.300" /><path d="M7 14h7M10 12v2" stroke="#fff" strokeWidth="1.300" /><path d="M1.500 1v3h4V1M3.500 4v9h3" fill="none" stroke="#fff" strokeWidth="1.300" /></svg>
            </TrayButton>
            <TrayButton aria-label="Volume muted">
              <svg width="16" height="16" viewBox="0 0 16 16"><path d="M1 5h3l5-4v14l-5-4H1z" fill="#fff" /><RedCross /></svg>
            </TrayButton>
            <Clock>1:25 PM<br />11/2/2025</Clock>
          </Tray>
          <ShowDesktop aria-label="Show desktop" />
        </Taskbar>
      </Desktop>
    </>
  );
}
